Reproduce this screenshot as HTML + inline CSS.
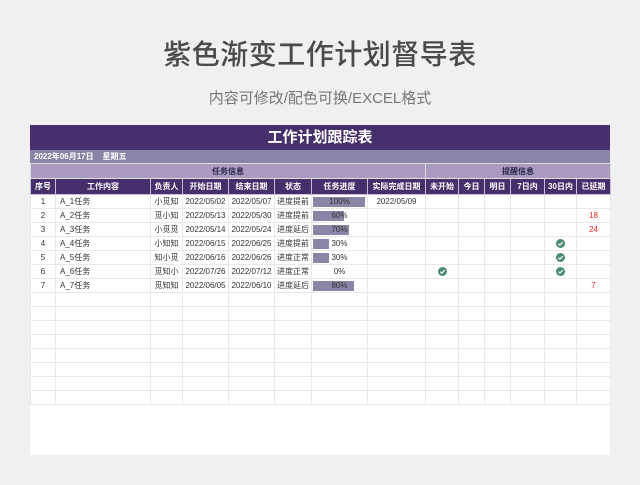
<!DOCTYPE html>
<html><head><meta charset="utf-8">
<style>
body{margin:0;width:640px;height:485px;background:#f0f0f0;font-family:"Liberation Sans","Noto Sans CJK SC",sans-serif;position:relative;overflow:hidden}
.t1{position:absolute;top:33px;left:0;width:640px;text-align:center;font-size:28px;color:#4a4a4a;letter-spacing:0.5px;font-weight:500}
.t2{position:absolute;top:87px;left:0;width:640px;text-align:center;font-size:15px;color:#777}
.panel{position:absolute;left:30px;top:125px;width:580px;height:330px;background:#fff}
.bar{height:25px;background:#45306b;color:#fff;font-size:15px;font-weight:bold;text-align:center;line-height:25px}
.date{height:13px;background:#8b84a8;color:#fff;font-size:8px;font-weight:bold;line-height:13px;padding-left:4px}
table{border-collapse:collapse;table-layout:fixed;width:580px}
td{font-size:8px;color:#333;text-align:center;height:13px;padding:0;border:1px solid #e8e8ea;white-space:nowrap;overflow:hidden}
tr.g td{background:#a99cbf;color:#2a2040;font-weight:bold;height:14px;border:1px solid #ddd}
tr.h td{background:#45306b;color:#fff;font-weight:bold;height:15px;border:1px solid #c8c0d8}
td.l{text-align:left;padding-left:4px}
.pb{position:relative;height:10px}
.pb i{position:absolute;left:1px;top:0;height:10px;background:#8a84a6}
.pb span{position:relative}
.r{color:#f02020}
.ck{display:inline-block;width:9px;height:9px;vertical-align:middle}
</style></head><body>
<div class="t1">紫色渐变工作计划督导表</div>
<div class="t2">内容可修改/配色可换/EXCEL格式</div>
<div class="panel">
<div class="bar">工作计划跟踪表</div>
<div class="date">2022年06月17日&nbsp;&nbsp;&nbsp;&nbsp;星期五</div>
<table>
<colgroup><col style="width:25px"><col style="width:95px"><col style="width:32px"><col style="width:46px"><col style="width:46px"><col style="width:37px"><col style="width:56px"><col style="width:58px"><col style="width:33px"><col style="width:26px"><col style="width:26px"><col style="width:34px"><col style="width:32px"><col style="width:34px"></colgroup>
<tr class="g"><td colspan="8">任务信息</td><td colspan="6">提醒信息</td></tr>
<tr class="h"><td>序号</td><td>工作内容</td><td>负责人</td><td>开始日期</td><td>结束日期</td><td>状态</td><td>任务进度</td><td>实际完成日期</td><td>未开始</td><td>今日</td><td>明日</td><td>7日内</td><td>30日内</td><td>已延期</td></tr>
<tr><td>1</td><td class="l">A_1任务</td><td>小觅知</td><td>2022/05/02</td><td>2022/05/07</td><td>进度提前</td><td><div class="pb"><i style="width:52px"></i><span>100%</span></div></td><td>2022/05/09</td><td></td><td></td><td></td><td></td><td></td><td></td></tr>
<tr><td>2</td><td class="l">A_2任务</td><td>觅小知</td><td>2022/05/13</td><td>2022/05/30</td><td>进度提前</td><td><div class="pb"><i style="width:31px"></i><span>60%</span></div></td><td></td><td></td><td></td><td></td><td></td><td></td><td class="r">18</td></tr>
<tr><td>3</td><td class="l">A_3任务</td><td>小觅觅</td><td>2022/05/14</td><td>2022/05/24</td><td>进度延后</td><td><div class="pb"><i style="width:36px"></i><span>70%</span></div></td><td></td><td></td><td></td><td></td><td></td><td></td><td class="r">24</td></tr>
<tr><td>4</td><td class="l">A_4任务</td><td>小知知</td><td>2022/06/15</td><td>2022/06/25</td><td>进度提前</td><td><div class="pb"><i style="width:16px"></i><span>30%</span></div></td><td></td><td></td><td></td><td></td><td></td><td><svg class="ck" viewBox="0 0 10 10"><circle cx="5" cy="5" r="5" fill="#4a8a6e"/><path d="M2.6 5.2l1.7 1.7 3.2-3.4" stroke="#fff" stroke-width="1.3" fill="none"/></svg></td><td></td></tr>
<tr><td>5</td><td class="l">A_5任务</td><td>知小觅</td><td>2022/06/16</td><td>2022/06/26</td><td>进度正常</td><td><div class="pb"><i style="width:16px"></i><span>30%</span></div></td><td></td><td></td><td></td><td></td><td></td><td><svg class="ck" viewBox="0 0 10 10"><circle cx="5" cy="5" r="5" fill="#4a8a6e"/><path d="M2.6 5.2l1.7 1.7 3.2-3.4" stroke="#fff" stroke-width="1.3" fill="none"/></svg></td><td></td></tr>
<tr><td>6</td><td class="l">A_6任务</td><td>觅知小</td><td>2022/07/26</td><td>2022/07/12</td><td>进度正常</td><td>0%</td><td></td><td><svg class="ck" viewBox="0 0 10 10"><circle cx="5" cy="5" r="5" fill="#4a8a6e"/><path d="M2.6 5.2l1.7 1.7 3.2-3.4" stroke="#fff" stroke-width="1.3" fill="none"/></svg></td><td></td><td></td><td></td><td><svg class="ck" viewBox="0 0 10 10"><circle cx="5" cy="5" r="5" fill="#4a8a6e"/><path d="M2.6 5.2l1.7 1.7 3.2-3.4" stroke="#fff" stroke-width="1.3" fill="none"/></svg></td><td></td></tr>
<tr><td>7</td><td class="l">A_7任务</td><td>觅知知</td><td>2022/06/05</td><td>2022/06/10</td><td>进度延后</td><td><div class="pb"><i style="width:41px"></i><span>80%</span></div></td><td></td><td></td><td></td><td></td><td></td><td></td><td class="r">7</td></tr>
<tr><td></td><td></td><td></td><td></td><td></td><td></td><td></td><td></td><td></td><td></td><td></td><td></td><td></td><td></td></tr>
<tr><td></td><td></td><td></td><td></td><td></td><td></td><td></td><td></td><td></td><td></td><td></td><td></td><td></td><td></td></tr>
<tr><td></td><td></td><td></td><td></td><td></td><td></td><td></td><td></td><td></td><td></td><td></td><td></td><td></td><td></td></tr>
<tr><td></td><td></td><td></td><td></td><td></td><td></td><td></td><td></td><td></td><td></td><td></td><td></td><td></td><td></td></tr>
<tr><td></td><td></td><td></td><td></td><td></td><td></td><td></td><td></td><td></td><td></td><td></td><td></td><td></td><td></td></tr>
<tr><td></td><td></td><td></td><td></td><td></td><td></td><td></td><td></td><td></td><td></td><td></td><td></td><td></td><td></td></tr>
<tr><td></td><td></td><td></td><td></td><td></td><td></td><td></td><td></td><td></td><td></td><td></td><td></td><td></td><td></td></tr>
<tr><td></td><td></td><td></td><td></td><td></td><td></td><td></td><td></td><td></td><td></td><td></td><td></td><td></td><td></td></tr>
</table>
</div>
</body></html>
